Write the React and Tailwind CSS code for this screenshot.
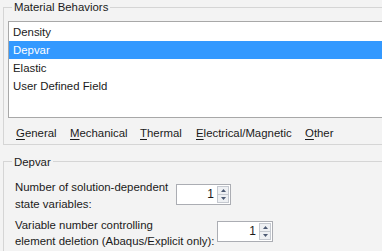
import React from "react";

function Spin({ className = "" }) {
  return (
    <div className={"flex h-[21px] border border-[#abadb3] bg-white " + className}>
      <div className="flex-1 text-right pr-[3px] leading-[19px] text-[12px]">1</div>
      <div className="flex flex-col w-[12px] my-[1px] mr-[1px]">
        <div className="flex-1 border border-[#c5c9d0] bg-[#eef0f3] flex items-center justify-center">
          <svg width="5" height="3" viewBox="0 0 5 3"><path d="M0 3 L2.5 0 L5 3 Z" fill="#4d5a73" /></svg>
        </div>
        <div className="flex-1 border border-[#c5c9d0] border-t-0 bg-[#eef0f3] flex items-center justify-center">
          <svg width="5" height="3" viewBox="0 0 5 3"><path d="M0 0 L2.5 3 L5 0 Z" fill="#4d5a73" /></svg>
        </div>
      </div>
    </div>
  );
}

function Tab({ first, rest, className = "" }) {
  return (
    <span className={"whitespace-nowrap " + className}>
      <span className="underline underline-offset-[2px]">{first}</span>
      {rest}
    </span>
  );
}

export default function App() {
  return (
    <div
      className="w-[382px] h-[251px] overflow-hidden bg-[#f3f3f3] text-[11.4px] text-[#1a1a1a]"
      style={{ fontFamily: '"Liberation Sans", "Noto Sans CJK SC", sans-serif' }}
    >
      <div className="pt-[7px] pl-[3px]">
        <div className="relative w-[400px] h-[138px] border-t border-l border-b border-[#d5d5d5]">
          <div className="absolute -top-[8px] left-[8px] px-[2px] bg-[#f3f3f3] leading-[15px]">
            Material Behaviors
          </div>
          <div className="ml-[4px] mt-[13px] h-[97px] border border-[#a8a8a8] bg-white pt-[1px]">
            <div className="h-[18px] leading-[18px] pl-[4px]">Density</div>
            <div className="h-[18px] leading-[18px] pl-[4px] bg-[#3399ff] text-white">Depvar</div>
            <div className="h-[18px] leading-[18px] pl-[4px]">Elastic</div>
            <div className="h-[18px] leading-[18px] pl-[4px]">User Defined Field</div>
          </div>
          <div className="flex pl-[12px] mt-[7px] leading-[16px]">
            <Tab first="G" rest="eneral" className="w-[54px]" />
            <Tab first="M" rest="echanical" className="w-[70px]" />
            <Tab first="T" rest="hermal" className="w-[56px]" />
            <Tab first="E" rest="lectrical/Magnetic" className="w-[109px]" />
            <Tab first="O" rest="ther" />
          </div>
        </div>
      </div>
      <div className="pt-[16px] pl-[3px]">
        <div className="relative w-[400px] h-[100px] border-t border-l border-[#d5d5d5]">
          <div className="absolute -top-[8px] left-[8px] px-[2px] bg-[#f3f3f3] leading-[16px]">
            Depvar
          </div>
          <div className="flex pl-[11px] pt-[17px]">
            <div className="w-[161px] leading-[17px] whitespace-nowrap">
              Number of solution-dependent
              <br />
              state variables:
            </div>
            <Spin className="w-[55px] mt-[5px]" />
          </div>
          <div className="flex pl-[11px] pt-[4px]">
            <div className="w-[202px] leading-[16px] whitespace-nowrap">
              Variable number controlling
              <br />
              element deletion (Abaqus/Explicit only):
            </div>
            <Spin className="w-[56px] mt-[4px]" />
          </div>
        </div>
      </div>
    </div>
  );
}
